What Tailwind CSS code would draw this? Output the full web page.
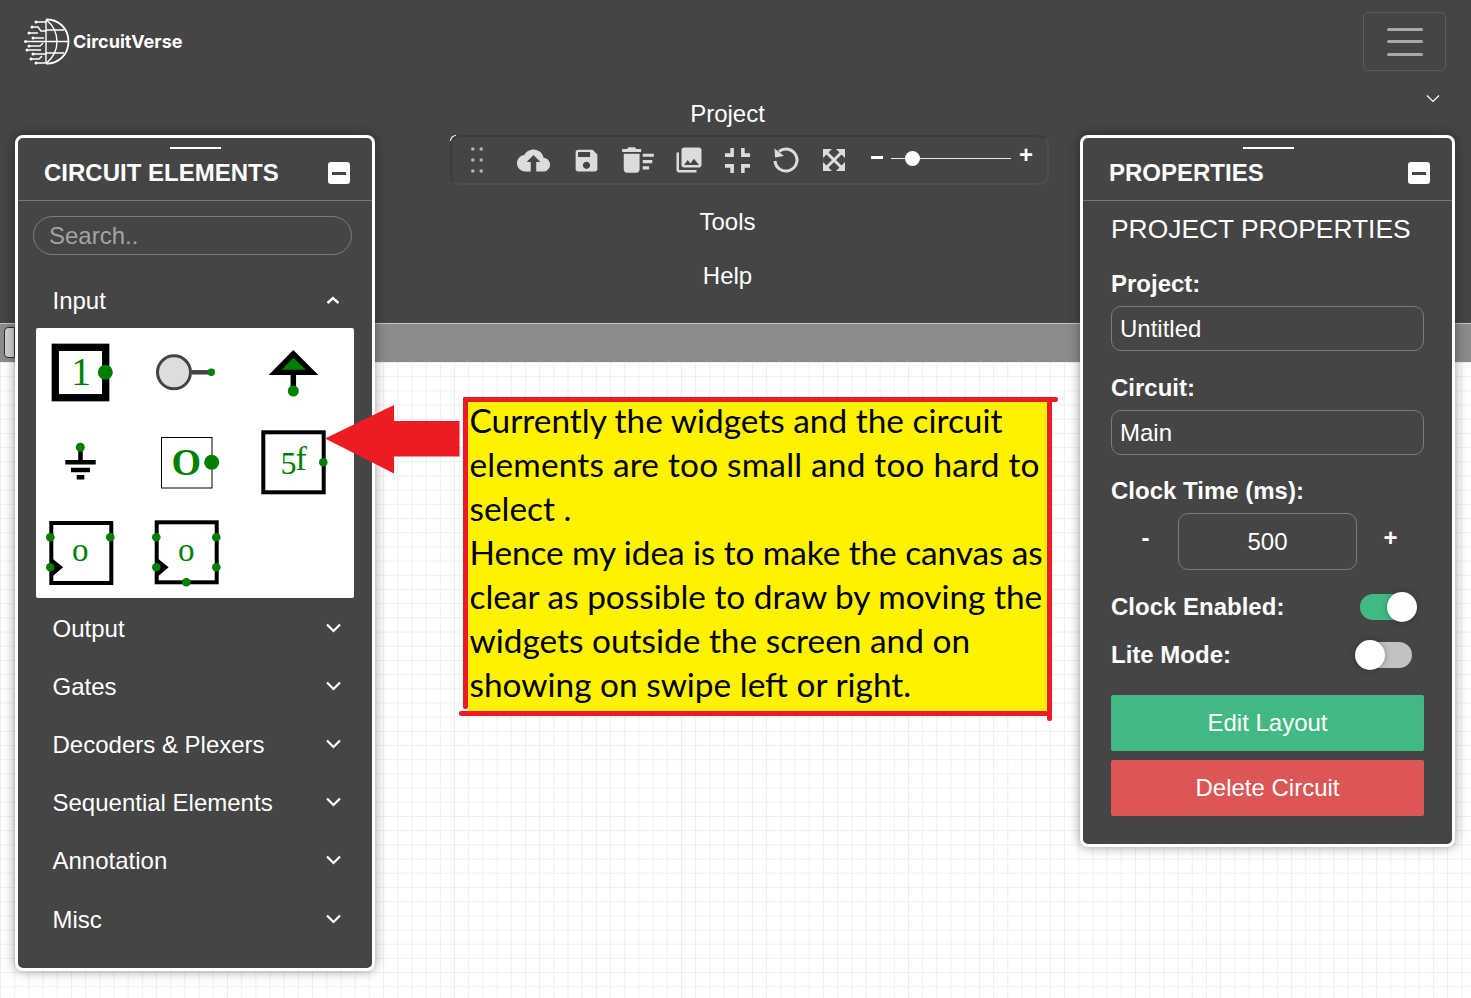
<!DOCTYPE html>
<html lang="en">
<head>
    <meta charset="UTF-8">
    <title>CircuitVerse Simulator</title>
    <script src="https://cdn.jsdelivr.net/npm/@tailwindcss/browser@4"></script>
</head>
<body class="bg-white font-['Liberation_Sans',Arial,sans-serif] text-white overflow-hidden">
<div class="relative w-[1471px] h-[998px] overflow-hidden">

    <!-- navbar -->
    <header class="h-[323px] bg-[#454545]">
        <div class="flex justify-between pl-[24px] pr-[25px] pt-[12px] h-[87px]">
            <a href="#" class="flex items-center h-[59px] gap-[1px]">
                <svg width="48" height="48" viewBox="0 0 48 48" fill="none" stroke="#fff" stroke-width="1.4">
                    <path d="M22 1.500C34 1 44.500 10 44.500 23.500S34 46 22 45.500" stroke-width="1.800"/>
                    <path d="M22 1.500C30 8 33 15 33 23.500S30 39 22 45.500M22 2V45M22 12H40M22 23.500H44.500M22 35H40M12 4H22M8 9L14 9L17 13H22M5 15H14M9 20L20 20M1 23.500H22M5 28L16 28L19 25M3 32H17M9 36H22M7 41L15 41L18 38M12 45H22"/>
                    <g fill="#fff" stroke="none">
                        <circle cx="12" cy="4" r="1.500"/><circle cx="8" cy="9" r="1.500"/><circle cx="5" cy="15" r="1.500"/><circle cx="9" cy="20" r="1.500"/><circle cx="1.500" cy="23.500" r="1.500"/><circle cx="5" cy="28" r="1.500"/><circle cx="3" cy="32" r="1.500"/><circle cx="9" cy="36" r="1.500"/><circle cx="7" cy="41" r="1.500"/><circle cx="12" cy="45" r="1.500"/>
                    </g>
                </svg>
                <span class="font-['Inter',sans-serif] font-bold text-[18px]">CircuitVerse</span>
            </a>
            <button class="w-[83px] h-[59px] border border-[#5c5c5c] rounded-[5px] flex flex-col items-center justify-center gap-[9.500px]">
                <span class="block w-[36px] h-[3px] bg-[#a9a9a9] rounded-full"></span>
                <span class="block w-[36px] h-[3px] bg-[#a9a9a9] rounded-full"></span>
                <span class="block w-[36px] h-[3px] bg-[#a9a9a9] rounded-full"></span>
            </button>
        </div>
        <nav class="flex flex-col items-center text-[24px] w-[1455px]">
            <div class="h-[54px] leading-[54px]">Project</div>
            <div class="h-[54px]"></div>
            <div class="h-[54px] leading-[54px]">Tools</div>
            <div class="h-[54px] leading-[54px]">Help</div>
        </nav>
    </header>

    <!-- tab bar -->
    <div class="h-[39px] bg-[#8b8b8b] border-t border-[#c4c4c4] pl-[4px] pt-[3px]">
        <div class="w-[11px] h-[31px] rounded-l-[4px] border border-[#2e2e2e] bg-[#d0d0d0]"></div>
    </div>

    <!-- canvas -->
    <main class="h-[636px] bg-white bg-[linear-gradient(#eeeeee_1px,transparent_1px),linear-gradient(90deg,#eeeeee_1px,transparent_1px)] bg-[size:14.200px_14.200px]"></main>

    <!-- collapse chevron -->
    <svg class="absolute left-[1426px] top-[94px]" width="14" height="9" viewBox="0 0 14 9" fill="none" stroke="#fff" stroke-width="1.200"><path d="M1 1.500L7 7.500L13 1.500"/></svg>

    <!-- floating toolbar -->
    <div class="absolute left-[450px] top-[135px] w-[599px] h-[50px] rounded-[10px] border-2 border-[#3c3c3c] border-b-[#4e4e4e] border-r-[#4e4e4e] flex items-center text-[#dcdcdc]">
        <div class="absolute -left-[2px] -top-[2px] w-[6px] h-[6px] border-t border-l border-white rounded-tl-[6px]"></div>
        <div class="w-[53px] pl-[19px]">
            <svg width="12" height="26" viewBox="0 0 12 26" fill="#b5b5b5"><circle cx="1.800" cy="2" r="1.800"/><circle cx="10.200" cy="2" r="1.800"/><circle cx="1.800" cy="13" r="1.800"/><circle cx="10.200" cy="13" r="1.800"/><circle cx="1.800" cy="24" r="1.800"/><circle cx="10.200" cy="24" r="1.800"/></svg>
        </div>
        <div class="w-[56px] flex justify-center">
            <svg width="33" height="33" viewBox="0 0 24 24" fill="#dcdcdc"><path d="M19.35 10.040C18.670 6.590 15.640 4 12 4 9.110 4 6.600 5.640 5.350 8.040 2.340 8.360 0 10.910 0 14c0 3.310 2.690 6 6 6h13c2.760 0 5-2.240 5-5 0-2.640-2.050-4.780-4.650-4.960zM14 13v7h-4v-7H7l5-5 5 5h-3z"/></svg>
        </div>
        <div class="w-[50px] flex justify-center">
            <svg width="29" height="29" viewBox="0 0 24 24" fill="#dcdcdc"><path d="M17 3H5c-1.110 0-2 .9-2 2v14c0 1.100.89 2 2 2h14c1.100 0 2-.9 2-2V7l-4-4zm-5 16c-1.660 0-3-1.340-3-3s1.340-3 3-3 3 1.340 3 3-1.340 3-3 3zm3-10H5V5h10v4z"/></svg>
        </div>
        <div class="w-[53px] flex justify-center">
            <svg width="38" height="38" viewBox="0 0 24 24" fill="#dcdcdc"><path d="M15 16h4v2h-4zm0-8h7v2h-7zm0 4h6v2h-6zM3 18c0 1.100.9 2 2 2h6c1.100 0 2-.9 2-2V8H3v10zM14 5h-3l-1-1H6L5 5H2v2h12z"/></svg>
        </div>
        <div class="w-[50px] flex justify-center">
            <svg width="30" height="30" viewBox="0 0 24 24" fill="#dcdcdc"><path d="M22 16V4c0-1.100-.9-2-2-2H8c-1.100 0-2 .9-2 2v12c0 1.100.9 2 2 2h12c1.100 0 2-.9 2-2zm-11-4l2.030 2.710L16 11l4 5H8l3-4zM2 6v14c0 1.100.9 2 2 2h14v-2H4V6H2z"/></svg>
        </div>
        <div class="w-[47px] flex justify-center">
            <svg width="43" height="43" viewBox="0 0 24 24" fill="#dcdcdc"><path d="M5 16h3v3h2v-5H5v2zm3-8H5v2h5V5H8v3zm6 11h2v-3h3v-2h-5v5zm2-11V5h-2v5h5V8h-3z"/></svg>
        </div>
        <div class="w-[49px] flex justify-center">
            <svg width="28" height="28" viewBox="0 0 28 28" fill="none"><path d="M7 5.500A11 11 0 1 1 3 15" stroke="#dcdcdc" stroke-width="3"/><polygon points="2.500,2.500 3,11.500 12,10" fill="#dcdcdc"/></svg>
        </div>
        <div class="w-[48px] flex justify-center">
            <svg width="24" height="24" viewBox="0 0 24 24" fill="#dcdcdc"><path d="M4 4L20 20M20 4L4 20" stroke="#dcdcdc" stroke-width="3"/><polygon points="1,1 10,1 1,10"/><polygon points="23,1 14,1 23,10"/><polygon points="1,23 10,23 1,14"/><polygon points="23,23 14,23 23,14"/></svg>
        </div>
        <div class="ml-[13px] w-[12px] h-[3px] bg-white -mt-[6px]"></div>
        <div class="ml-[8px] w-[120px] h-[1px] bg-[#e8e8e8] relative -mt-[4px]">
            <div class="absolute left-[14px] -top-[7px] w-[15px] h-[15px] rounded-full bg-white"></div>
        </div>
        <div class="ml-[8px] -mt-[10px] font-bold text-[24px] leading-none text-white">+</div>
    </div>

    <!-- circuit elements panel -->
    <aside class="absolute left-[15px] top-[135px] w-[360px] h-[836px] bg-[#454545] border-[3px] border-white rounded-[8px] shadow-[0_0_12px_rgba(0,0,0,0.4)]">
        <div class="relative h-[63px] pt-[8px] pl-[26px] pr-[22px] flex items-center justify-between border-b border-[#777]">
            <div class="absolute left-[152px] top-[9px] w-[51px] h-[2px] bg-white"></div>
            <h2 class="font-bold text-[24px]">CIRCUIT ELEMENTS</h2>
            <div class="w-[22px] h-[22px] bg-white rounded-[3px] flex items-center justify-center"><span class="block w-[14px] h-[3px] bg-[#454545]"></span></div>
        </div>
        <div class="ml-[15px] mt-[15px] w-[319px] h-[39px]">
            <input type="text" placeholder="Search.." class="w-full h-full rounded-full border border-[#7c7c7c] bg-transparent pl-[15px] text-[24px] placeholder:text-[#a3a3a3] outline-none">
        </div>
        <div class="mt-[19px] h-[54px] pl-[34.500px] pr-[32px] flex items-center justify-between text-[24px]">
            <span>Input</span>
            <svg class="mb-[3px]" width="14" height="8" viewBox="0 0 14 8" fill="none" stroke="#fff" stroke-width="2.400"><path d="M1.500 7L7 2L12.500 7"/></svg>
        </div>
        <div class="ml-[18px] w-[318px] h-[270px] bg-white rounded-[2px] grid grid-cols-3 grid-rows-3">
            <svg viewBox="0 0 106 90" width="106" height="90">
                <rect x="19.300" y="19.300" width="50.400" height="50.400" fill="#fff" stroke="#000" stroke-width="7.300"/>
                <text x="45" y="57" text-anchor="middle" fill="#008000" font-family="Liberation Serif" font-size="40">1</text>
                <circle cx="69.300" cy="44.300" r="7.500" fill="#008000"/>
            </svg>
            <svg viewBox="0 0 106 90" width="106" height="90">
                <path d="M50 44.300H69" stroke="#444" stroke-width="4.500"/>
                <circle cx="32" cy="44.300" r="16.500" fill="#ddd" stroke="#444" stroke-width="3"/>
                <circle cx="69.300" cy="44.300" r="3.700" fill="#008000"/>
            </svg>
            <svg viewBox="0 0 106 90" width="106" height="90">
                <path d="M45.300 47V63" stroke="#000" stroke-width="5.500"/>
                <polygon points="45.300,22 20.700,47 70.300,47" fill="#000"/>
                <polygon points="45.300,29.700 33.700,41.700 58,41.700" fill="#008000"/>
                <circle cx="45.300" cy="63" r="5.500" fill="#008000"/>
            </svg>
            <svg viewBox="0 0 106 90" width="106" height="90">
                <path d="M44.500 29V44M29.300 44.300H59.700M35 52H54M40.700 59.300H48.300" stroke="#000" stroke-width="4.500"/>
                <circle cx="44.300" cy="29.300" r="4.500" fill="#008000"/>
            </svg>
            <svg viewBox="0 0 106 90" width="106" height="90">
                <rect x="19.500" y="19.500" width="50.500" height="50.500" fill="#fff" stroke="#000" stroke-width="1"/>
                <text x="44.300" y="57" text-anchor="middle" fill="#008000" font-family="Liberation Serif" font-weight="bold" font-size="38">O</text>
                <circle cx="69.700" cy="44.300" r="7.500" fill="#008000"/>
            </svg>
            <svg viewBox="0 0 106 90" width="106" height="90" class="overflow-visible">
                <rect x="15.300" y="14.300" width="60.400" height="60" fill="#fff" stroke="#000" stroke-width="4"/>
                <text x="32.500" y="56.300" fill="#008000" font-family="Liberation Serif" font-size="32">5</text>
                <text x="47.500" y="52" fill="#008000" font-family="Liberation Serif" font-size="34">f</text>
                <circle cx="75.300" cy="44.300" r="4.300" fill="#008000"/>
            </svg>
            <svg viewBox="0 0 106 90" width="106" height="90">
                <rect x="15.300" y="15" width="60" height="60" fill="#fff" stroke="#000" stroke-width="4"/>
                <path d="M15 52L24 59.300L15 67" fill="#000" stroke="#000" stroke-width="4"/>
                <text x="44.300" y="53" text-anchor="middle" fill="#008000" font-family="Liberation Serif" font-size="33">o</text>
                <circle cx="14.300" cy="29.300" r="4.300" fill="#008000"/>
                <circle cx="74.300" cy="29.300" r="4.300" fill="#008000"/>
                <circle cx="14.300" cy="59.300" r="4.300" fill="#008000"/>
            </svg>
            <svg viewBox="0 0 106 90" width="106" height="90">
                <rect x="14.700" y="14.300" width="60" height="60" fill="#fff" stroke="#000" stroke-width="4"/>
                <path d="M14.500 52L23.500 59.300L14.500 67" fill="#000" stroke="#000" stroke-width="4"/>
                <text x="44.300" y="53" text-anchor="middle" fill="#008000" font-family="Liberation Serif" font-size="33">o</text>
                <circle cx="14.300" cy="29.300" r="4.300" fill="#008000"/>
                <circle cx="74.300" cy="29.300" r="4.300" fill="#008000"/>
                <circle cx="14.300" cy="59.300" r="4.300" fill="#008000"/>
                <circle cx="74.300" cy="59.300" r="4.300" fill="#008000"/>
                <circle cx="44.300" cy="74.300" r="4.300" fill="#008000"/>
            </svg>
            <div></div>
        </div>
        <ul class="mt-[2px] text-[24px]">
            <li class="h-[58.100px] pl-[34.500px] pr-[31px] flex items-center justify-between"><span>Output</span><svg class="mb-[2px]" width="15" height="10" viewBox="0 0 15 10" fill="none" stroke="#fff" stroke-width="2.200"><path d="M1 1.500L7.500 8L14 1.500"/></svg></li>
            <li class="h-[58.100px] pl-[34.500px] pr-[31px] flex items-center justify-between"><span>Gates</span><svg class="mb-[2px]" width="15" height="10" viewBox="0 0 15 10" fill="none" stroke="#fff" stroke-width="2.200"><path d="M1 1.500L7.500 8L14 1.500"/></svg></li>
            <li class="h-[58.100px] pl-[34.500px] pr-[31px] flex items-center justify-between"><span>Decoders &amp; Plexers</span><svg class="mb-[2px]" width="15" height="10" viewBox="0 0 15 10" fill="none" stroke="#fff" stroke-width="2.200"><path d="M1 1.500L7.500 8L14 1.500"/></svg></li>
            <li class="h-[58.100px] pl-[34.500px] pr-[31px] flex items-center justify-between"><span>Sequential Elements</span><svg class="mb-[2px]" width="15" height="10" viewBox="0 0 15 10" fill="none" stroke="#fff" stroke-width="2.200"><path d="M1 1.500L7.500 8L14 1.500"/></svg></li>
            <li class="h-[58.100px] pl-[34.500px] pr-[31px] flex items-center justify-between"><span>Annotation</span><svg class="mb-[2px]" width="15" height="10" viewBox="0 0 15 10" fill="none" stroke="#fff" stroke-width="2.200"><path d="M1 1.500L7.500 8L14 1.500"/></svg></li>
            <li class="h-[58.100px] pl-[34.500px] pr-[31px] flex items-center justify-between"><span>Misc</span><svg class="mb-[2px]" width="15" height="10" viewBox="0 0 15 10" fill="none" stroke="#fff" stroke-width="2.200"><path d="M1 1.500L7.500 8L14 1.500"/></svg></li>
        </ul>
    </aside>

    <!-- properties panel -->
    <aside class="absolute left-[1080px] top-[135px] w-[375px] h-[712px] bg-[#454545] border-[3px] border-white rounded-[8px] shadow-[0_0_12px_rgba(0,0,0,0.4)]">
        <div class="relative h-[63px] pt-[8px] pl-[26px] pr-[22px] flex items-center justify-between border-b border-[#777]">
            <div class="absolute left-[160px] top-[9px] w-[51px] h-[2px] bg-white"></div>
            <h2 class="font-bold text-[24px]">PROPERTIES</h2>
            <div class="w-[22px] h-[22px] bg-white rounded-[3px] flex items-center justify-center"><span class="block w-[14px] h-[3px] bg-[#454545]"></span></div>
        </div>
        <div class="pl-[28px] w-[341px] text-[24px]">
            <h3 class="h-[56px] leading-[56px] text-[26.400px]">PROJECT PROPERTIES</h3>
            <label class="block mt-[13px] h-[28px] leading-[28px] font-bold">Project:</label>
            <input value="Untitled" class="block mt-[8px] w-[313px] h-[45px] px-[8px] rounded-[10px] border border-[#7c7c7c] bg-transparent outline-none">
            <label class="block mt-[23px] h-[28px] leading-[28px] font-bold">Circuit:</label>
            <input value="Main" class="block mt-[8px] w-[313px] h-[45px] px-[8px] rounded-[10px] border border-[#7c7c7c] bg-transparent outline-none">
            <label class="block mt-[22px] h-[28px] leading-[28px] font-bold">Clock Time (ms):</label>
            <div class="mt-[8px] h-[57px] flex items-center">
                <span class="w-[67px] pl-[2px] text-center font-bold pb-[8px]">-</span>
                <input value="500" class="w-[179px] h-[57px] rounded-[10px] border border-[#7c7c7c] bg-transparent text-center outline-none">
                <span class="w-[67px] text-center font-bold pb-[8px]">+</span>
            </div>
            <div class="mt-[22px] h-[30px] flex items-center justify-between font-bold">
                <span>Clock Enabled:</span>
                <div class="relative mr-[12px] w-[52px] h-[26px] rounded-full bg-[#42b983]">
                    <div class="absolute -right-[5px] -top-[2px] w-[30px] h-[30px] rounded-full bg-white shadow-[0_0_6px_rgba(0,0,0,0.3)]"></div>
                </div>
            </div>
            <div class="mt-[18px] h-[30px] flex items-center justify-between font-bold">
                <span>Lite Mode:</span>
                <div class="relative mr-[12px] w-[52px] h-[26px] rounded-full bg-[#c2c2c2]">
                    <div class="absolute -left-[5px] -top-[2px] w-[30px] h-[30px] rounded-full bg-white shadow-[0_0_6px_rgba(0,0,0,0.3)]"></div>
                </div>
            </div>
            <button class="block mt-[25px] w-[313px] h-[56px] rounded-[2px] bg-[#42b983]">Edit Layout</button>
            <button class="block mt-[9px] w-[313px] h-[56px] rounded-[2px] bg-[#dc5656]">Delete Circuit</button>
        </div>
    </aside>

    <!-- annotation pasted on the canvas -->
    <div class="absolute left-[468px] top-[398px] w-[579px] h-[313px] bg-[#fff200] text-black font-['Lato',sans-serif] text-[33.400px] leading-[44px] pl-[1.500px] whitespace-nowrap">
        Currently the widgets and the circuit<br>
        <span class="tracking-[0.2px]">elements are too small and too hard to</span><br>
        select .<br>
        <span class="tracking-[-0.08px]">Hence my idea is to make the canvas as</span><br>
        clear as possible to draw by moving the<br>
        widgets outside the screen and on<br>
        showing on swipe left or right.
    </div>
    <div class="absolute left-[463px] top-[397px] w-[595px] h-[5px] bg-[#ed1c24] rounded-[2px]"></div>
    <div class="absolute left-[463px] top-[397px] w-[5px] h-[312px] bg-[#ed1c24] rounded-[2px]"></div>
    <div class="absolute left-[1047px] top-[397px] w-[5px] h-[324px] bg-[#ed1c24] rounded-[2px]"></div>
    <div class="absolute left-[459px] top-[711px] w-[593px] h-[5px] bg-[#ed1c24] rounded-[2px]"></div>
    <svg class="absolute left-[325px] top-[405px]" width="135" height="69" viewBox="0 0 135 69"><polygon points="0,33.500 69,0 69,16 134.500,16 134.500,51.500 69,51.500 69,68.500" fill="#ed1c24"/></svg>
</div>
</body>
</html>
